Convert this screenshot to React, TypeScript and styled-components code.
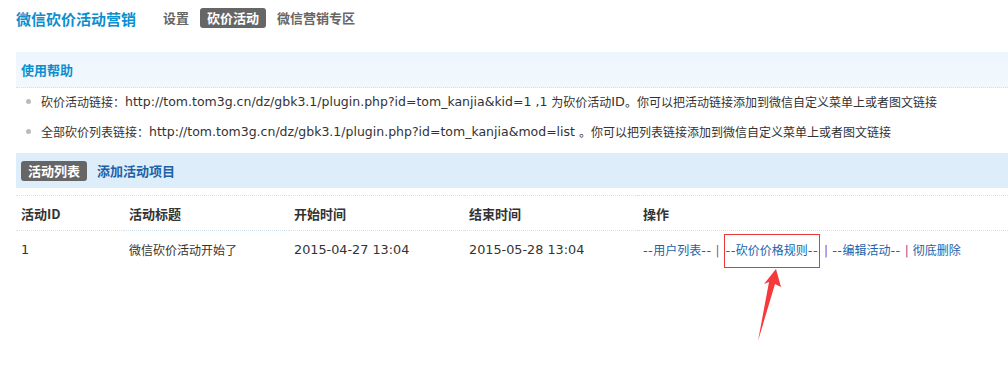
import styled, { createGlobalStyle } from "styled-components";

const GlobalStyle = createGlobalStyle`
    html, body {
        margin: 0;
        padding: 0;
        background: #fff;
        overflow: hidden;
    }
    body {
        font-family: "DejaVu Sans", "Noto Sans CJK SC", sans-serif;
        font-size: 12px;
        color: #333;
    }
`;

const Page = styled.div`
    position: relative;
    width: 1008px;
    height: 368px;
    padding-left: 16px;
    box-sizing: border-box;
    overflow: hidden;
`;

/* latin runs render a bit wider in the original (hinted verdana) */
const Latin = styled.span<{ $url?: boolean; $dash?: boolean }>`
    font-size: ${(p) => (p.$url ? "12.5px" : "12.8px")};
    letter-spacing: ${(p) => (p.$dash ? "0.5px" : "normal")};
`;

/* top nav */
const TopNav = styled.div`
    display: flex;
    align-items: center;
    gap: 4px;
    height: 36px;
    margin-bottom: 16px;
`;

const AppTitle = styled.h1`
    margin: 0 16px 0 0;
    font-family: "Noto Sans CJK SC", sans-serif;
    font-size: 15px;
    font-weight: bold;
    color: #0b8fcf;
`;

const NavItem = styled.span<{ $active?: boolean }>`
    font-family: "Noto Sans CJK SC", sans-serif;
    font-size: 13px;
    font-weight: bold;
    line-height: 20px;
    padding: 0 7px;
    border-radius: 3px;
    color: ${(p) => (p.$active ? "#fff" : "#666")};
    background: ${(p) => (p.$active ? "#666" : "transparent")};
`;

/* help box */
const Bar = styled.div<{ $tone: "help" | "list" }>`
    display: flex;
    align-items: center;
    gap: 10px;
    height: 35px;
    padding: 0 5px;
    background: ${(p) =>
        p.$tone === "help"
            ? "linear-gradient(#edf5fd, #f3f8fc)"
            : "#deedfa"};
    border-bottom: ${(p) => (p.$tone === "help" ? "1px dotted #d8dfe6" : "none")};
`;

const HelpTitle = styled.span`
    font-family: "Noto Sans CJK SC", sans-serif;
    font-size: 13px;
    font-weight: bold;
    color: #0b8fcf;
`;

const HelpList = styled.ul`
    list-style: none;
    margin: -2px 0 0;
    padding: 0;
`;

const HelpItem = styled.li`
    display: flex;
    align-items: center;
    height: 30px;
    padding-left: 10px;
    white-space: pre;

    &::before {
        content: "";
        width: 5px;
        height: 5px;
        border-radius: 50%;
        background: #bbb;
        margin-right: 10px;
    }
`;

const Spacer = styled.div`
    height: 7px;
`;

/* activity list */
const Tag = styled.span`
    font-family: "Noto Sans CJK SC", sans-serif;
    font-size: 13px;
    font-weight: bold;
    line-height: 20px;
    padding: 0 7px;
    border-radius: 3px;
    background: #666;
    color: #fff;
`;

const AddLink = styled.a`
    font-family: "Noto Sans CJK SC", sans-serif;
    font-size: 13px;
    font-weight: bold;
    color: #1d62a8;
    text-decoration: none;
`;

const Table = styled.table`
    margin-top: 7px;
    width: 992px;
    border-collapse: collapse;
    table-layout: fixed;
    border-top: 1px dotted #cfe2f2;
`;

const HeadCell = styled.th<{ $w?: number }>`
    width: ${(p) => (p.$w ? `${p.$w}px` : "auto")};
    height: 35px;
    padding: 0 5px;
    box-sizing: border-box;
    text-align: left;
    font-family: "Noto Sans CJK SC", sans-serif;
    font-size: 13px;
    font-weight: bold;
    color: #333;
    border-bottom: 1px dotted #cfe2f2;
`;

const Cell = styled.td`
    height: 36px;
    padding: 0 5px;
    white-space: nowrap;
`;

const ActionLink = styled.a<{ $marked?: boolean }>`
    color: #1d62a8;
    text-decoration: none;
    padding: ${(p) => (p.$marked ? "9px 1px" : "0")};
    border: ${(p) => (p.$marked ? "1px solid #e5393b" : "none")};
`;

const Sep = styled.span`
    color: #a04a9a;
    margin: 0 4px;
`;

const Arrow = styled.svg`
    position: absolute;
    left: 0;
    top: 0;
    pointer-events: none;
`;

export default function App() {
    return (
        <Page>
            <GlobalStyle />
            <TopNav>
                <AppTitle>微信砍价活动营销</AppTitle>
                <NavItem>设置</NavItem>
                <NavItem $active>砍价活动</NavItem>
                <NavItem>微信营销专区</NavItem>
            </TopNav>

            <Bar $tone="help">
                <HelpTitle>使用帮助</HelpTitle>
            </Bar>
            <HelpList>
                <HelpItem>
                    砍价活动链接：<Latin $url>http://tom.tom3g.cn/dz/gbk3.1/plugin.php?id=tom_kanjia&amp;kid=1 ,1 </Latin>为砍价活动<Latin>ID</Latin>。你可以把活动链接添加到微信自定义菜单上或者图文链接
                </HelpItem>
                <HelpItem>
                    全部砍价列表链接：<Latin $url>http://tom.tom3g.cn/dz/gbk3.1/plugin.php?id=tom_kanjia&amp;mod=list </Latin>。你可以把列表链接添加到微信自定义菜单上或者图文链接
                </HelpItem>
            </HelpList>
            <Spacer />

            <Bar $tone="list">
                <Tag>活动列表</Tag>
                <AddLink href="#">添加活动项目</AddLink>
            </Bar>

            <Table>
                <thead>
                    <tr>
                        <HeadCell $w={108}>活动ID</HeadCell>
                        <HeadCell $w={165}>活动标题</HeadCell>
                        <HeadCell $w={175}>开始时间</HeadCell>
                        <HeadCell $w={174}>结束时间</HeadCell>
                        <HeadCell>操作</HeadCell>
                    </tr>
                </thead>
                <tbody>
                    <tr>
                        <Cell><Latin>1</Latin></Cell>
                        <Cell>微信砍价活动开始了</Cell>
                        <Cell><Latin>2015-04-27 13:04</Latin></Cell>
                        <Cell><Latin>2015-05-28 13:04</Latin></Cell>
                        <Cell>
                            <ActionLink href="#"><Latin $dash>--</Latin>用户列表<Latin $dash>--</Latin></ActionLink>
                            <Sep>|</Sep>
                            <ActionLink href="#" $marked><Latin $dash>--</Latin>砍价价格规则<Latin $dash>--</Latin></ActionLink>
                            <Sep>|</Sep>
                            <ActionLink href="#"><Latin $dash>--</Latin>编辑活动<Latin $dash>--</Latin></ActionLink>
                            <Sep>|</Sep>
                            <ActionLink href="#">彻底删除</ActionLink>
                        </Cell>
                    </tr>
                </tbody>
            </Table>

            {/* red annotation arrow pointing at the marked link */}
            <Arrow width="1008" height="368" viewBox="0 0 1008 368">
                <polygon
                    points="776,269 781,287 775,284 758,341 769,282 764,284"
                    fill="#f43a3a"
                />
            </Arrow>
        </Page>
    );
}
